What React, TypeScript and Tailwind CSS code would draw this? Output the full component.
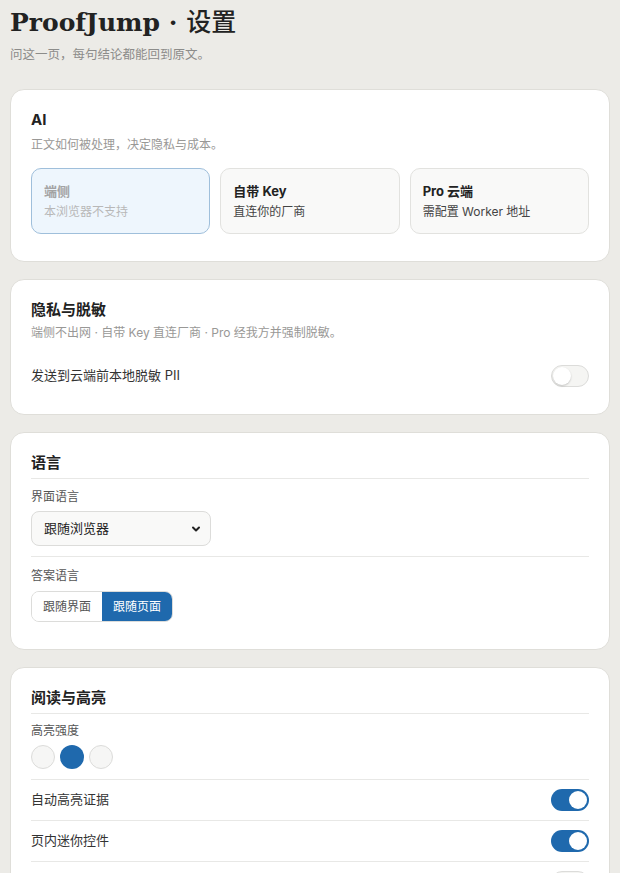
import React from "react";

const BLUE = "bg-[#1f69ad]";

function Toggle({ on }: { on: boolean }) {
  return on ? (
    <div className={`w-[38px] h-[22px] rounded-full ${BLUE} flex items-center justify-end px-[2px] shrink-0`}>
      <div className="w-[18px] h-[18px] rounded-full bg-white" />
    </div>
  ) : (
    <div className="w-[38px] h-[22px] rounded-full bg-[#f5f5f3] border border-[#dcdcda] flex items-center px-[1px] shrink-0">
      <div className="w-[18px] h-[18px] rounded-full bg-white shadow-[0_1px_2px_rgba(0,0,0,0.2)]" />
    </div>
  );
}

function Card({ children }: { children: React.ReactNode }) {
  return (
    <div className="bg-white border border-[#dfded9] rounded-[14px] px-5 pt-[19px] pb-[27px]">
      {children}
    </div>
  );
}

function Title({ children, divider }: { children: React.ReactNode; divider?: boolean }) {
  return (
    <div
      className={`text-[15px] leading-[22px] font-bold text-[#222] ${
        divider ? "border-b border-[#e8e8e6] pb-[4px]" : ""
      }`}
    >
      {children}
    </div>
  );
}

function Row({ label, on, last }: { label: string; on: boolean; last?: boolean }) {
  return (
    <div className={`flex items-center justify-between h-[41px] ${last ? "" : "border-b border-[#e8e8e6]"}`}>
      <span className="text-[13px] text-[#333]">{label}</span>
      <Toggle on={on} />
    </div>
  );
}

export default function App() {
  return (
    <div
      className="h-[873px] bg-[#ecebe7] px-[10px] pt-[4px] overflow-hidden"
      style={{ fontFamily: 'Inter, "Noto Sans CJK SC", sans-serif' }}
    >
      <h1
        className="h-[32px] text-[25px] leading-[32px] font-bold text-[#222] whitespace-nowrap"
        style={{ fontFamily: '"DejaVu Serif", "Noto Sans CJK SC", serif' }}
      >
        ProofJump ·{" "}
        <span className="leading-[32px]" style={{ fontFamily: '"Noto Sans CJK SC", serif', fontWeight: 500 }}>
          设置
        </span>
      </h1>
      <p className="mt-[9px] text-[12.5px] leading-[20px] text-[#8c8c8a]">问这一页，每句结论都能回到原文。</p>

      <div className="mt-[24px] flex flex-col gap-[17px]">
        <Card>
          <Title>AI</Title>
          <p className="mt-[5px] text-[12px] leading-[18px] text-[#999896]">正文如何被处理，决定隐私与成本。</p>
          <div className="mt-[14px] grid grid-cols-3 gap-[10px]">
            <div className="h-[66px] rounded-[10px] border border-[#9fbfdb] bg-[#eef6fd] px-[12px] flex flex-col justify-center">
              <div className="text-[13px] leading-[20px] font-bold text-[#a3a3a3]">端侧</div>
              <div className="text-[12px] leading-[18px] text-[#b8b8b8] mt-[2px]">本浏览器不支持</div>
            </div>
            <div className="h-[66px] rounded-[10px] border border-[#e2e2df] bg-[#f9f9f8] px-[12px] flex flex-col justify-center">
              <div className="text-[13px] leading-[20px] font-bold text-[#222]">自带 Key</div>
              <div className="text-[12px] leading-[18px] text-[#444] mt-[2px]">直连你的厂商</div>
            </div>
            <div className="h-[66px] rounded-[10px] border border-[#e2e2df] bg-[#f9f9f8] px-[12px] flex flex-col justify-center">
              <div className="text-[13px] leading-[20px] font-bold text-[#222]">Pro 云端</div>
              <div className="text-[12px] leading-[18px] text-[#444] mt-[2px]">需配置 Worker 地址</div>
            </div>
          </div>
        </Card>

        <Card>
          <Title>隐私与脱敏</Title>
          <p className="mt-[3px] text-[12px] leading-[18px] text-[#999896]">
            端侧不出网 · 自带 Key 直连厂商 · Pro 经我方并强制脱敏。
          </p>
          <div className="mt-[23px] flex items-center justify-between">
            <span className="text-[13px] text-[#333]">发送到云端前本地脱敏 PII</span>
            <Toggle on={false} />
          </div>
        </Card>

        <Card>
          <Title divider>语言</Title>
          <div className="mt-[9px] text-[12px] leading-[18px] text-[#555]">界面语言</div>
          <div className="mt-[5px] w-[180px] h-[35px] rounded-[8px] border border-[#dcdcda] bg-[#f9f9f8] flex items-center justify-between pl-[12px] pr-[9px]">
            <span className="text-[13px] text-[#222]">跟随浏览器</span>
            <svg width="10" height="10" viewBox="0 0 10 10">
              <path d="M2 3.5 L5 6.5 L8 3.5" fill="none" stroke="#222" strokeWidth="2" strokeLinecap="round" strokeLinejoin="round" />
            </svg>
          </div>
          <div className="mt-[10px] border-t border-[#e8e8e6]" />
          <div className="mt-[10px] text-[12px] leading-[18px] text-[#555]">答案语言</div>
          <div className="mt-[6px] flex">
            <div className="flex h-[31px] rounded-[8px] border border-[#dcdcda] overflow-hidden">
              <div className="w-[70px] flex items-center justify-center bg-white text-[12px] text-[#555]">跟随界面</div>
              <div className={`w-[70px] flex items-center justify-center ${BLUE} text-[12px] text-white`}>跟随页面</div>
            </div>
          </div>
        </Card>

        <Card>
          <Title divider>阅读与高亮</Title>
          <div className="mt-[8px] text-[12px] leading-[18px] text-[#555]">高亮强度</div>
          <div className="mt-[5px] flex gap-[5px] pb-[10px] border-b border-[#e8e8e6]">
            <div className="w-[24px] h-[24px] rounded-full bg-[#f6f6f5] border border-[#dcdcda]" />
            <div className={`w-[24px] h-[24px] rounded-full ${BLUE}`} />
            <div className="w-[24px] h-[24px] rounded-full bg-[#f6f6f5] border border-[#dcdcda]" />
          </div>
          <Row label="自动高亮证据" on={true} />
          <Row label="页内迷你控件" on={true} />
          <Row label="显示来源段落" on={false} />
          <Row label="键盘快捷键" on={true} last />
        </Card>
      </div>
    </div>
  );
}
